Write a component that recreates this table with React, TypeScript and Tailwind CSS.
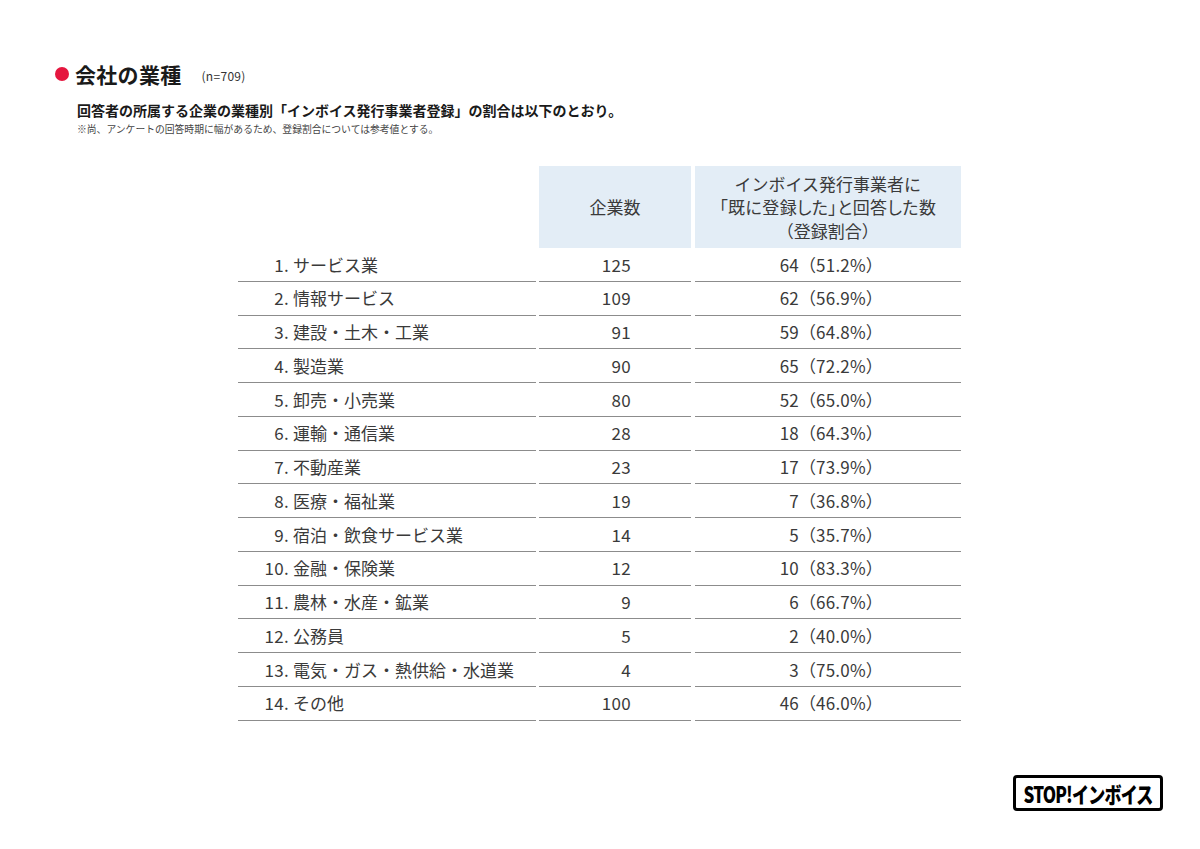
import React from "react";

const rows: [string, string, string, string][] = [
  ["1.", "サービス業", "125", "64（51.2%）"],
  ["2.", "情報サービス", "109", "62（56.9%）"],
  ["3.", "建設・土木・工業", "91", "59（64.8%）"],
  ["4.", "製造業", "90", "65（72.2%）"],
  ["5.", "卸売・小売業", "80", "52（65.0%）"],
  ["6.", "運輸・通信業", "28", "18（64.3%）"],
  ["7.", "不動産業", "23", "17（73.9%）"],
  ["8.", "医療・福祉業", "19", "7（36.8%）"],
  ["9.", "宿泊・飲食サービス業", "14", "5（35.7%）"],
  ["10.", "金融・保険業", "12", "10（83.3%）"],
  ["11.", "農林・水産・鉱業", "9", "6（66.7%）"],
  ["12.", "公務員", "5", "2（40.0%）"],
  ["13.", "電気・ガス・熱供給・水道業", "4", "3（75.0%）"],
  ["14.", "その他", "100", "46（46.0%）"],
];

export default function App() {
  return (
    <div
      className="relative w-[1200px] h-[849px] bg-white overflow-hidden text-[#222]"
      style={{ fontFamily: '"Noto Sans CJK JP", "Noto Sans", sans-serif' }}
    >
      <div className="pt-[57px] pl-[55px]">
        <div className="flex items-center h-[34px]">
          <span className="w-[14px] h-[14px] rounded-full bg-[#e5163f] mr-[6px]" />
          <span className="text-[21px] font-bold text-[#1a1a1a] leading-none tracking-[0.3px]">会社の業種</span>
          <span className="text-[12px] text-[#333] ml-[20px] mt-[4px] tracking-[0.3px]">(n=709)</span>
        </div>
        <div className="pl-[22px] mt-[9px] text-[14px] font-bold text-[#1a1a1a] leading-[20px]">
          回答者の所属する企業の業種別「インボイス発行事業者登録」の割合は以下のとおり。
        </div>
        <div className="pl-[22px] mt-[2px] text-[9.8px] text-[#444] leading-[14px]">
          ※尚、アンケートの回答時期に幅があるため、登録割合については参考値とする。
        </div>
      </div>

      <div className="ml-[238px] mt-[30px] w-[723px] text-[17px] text-[#3a3a3a]">
        <div className="grid grid-cols-[297.5px_152px_266.5px] gap-x-[3.5px] h-[82px]">
          <div />
          <div className="bg-[#e3edf6] flex items-center justify-center">企業数</div>
          <div className="bg-[#e3edf6] flex flex-col items-center justify-center leading-[23.5px]">
            <div>インボイス発行事業者に</div>
            <div className="[font-feature-settings:'palt'] tracking-[0.4px]">「既に登録した」と回答した数</div>
            <div>（登録割合）</div>
          </div>
        </div>
        {rows.map(([n, name, c, r]) => (
          <div key={n} className="grid grid-cols-[297.5px_152px_266.5px] gap-x-[3.5px] h-[33.75px]">
            <div className="flex items-center border-b-[1.5px] border-[#8c8c8c]">
              <span className="w-[51px] text-right tracking-[0.3px]">{n}</span>
              <span className="ml-[4px] whitespace-nowrap">{name}</span>
            </div>
            <div className="flex items-center justify-end pr-[60px] border-b-[1.5px] border-[#8c8c8c] tracking-[0.3px]">{c}</div>
            <div className="flex items-center justify-end pr-[78px] border-b-[1.5px] border-[#8c8c8c] tracking-[0.2px]">{r}</div>
          </div>
        ))}
      </div>

      <div className="absolute left-[1013px] top-[775px] w-[150px] h-[36px] border-[3px] border-black rounded-[4px] flex items-center justify-center">
        <span className="text-[17px] font-black text-black tracking-[-0.8px] leading-none scale-y-[1.3] inline-block">
          STOP!インボイス
        </span>
      </div>
    </div>
  );
}
